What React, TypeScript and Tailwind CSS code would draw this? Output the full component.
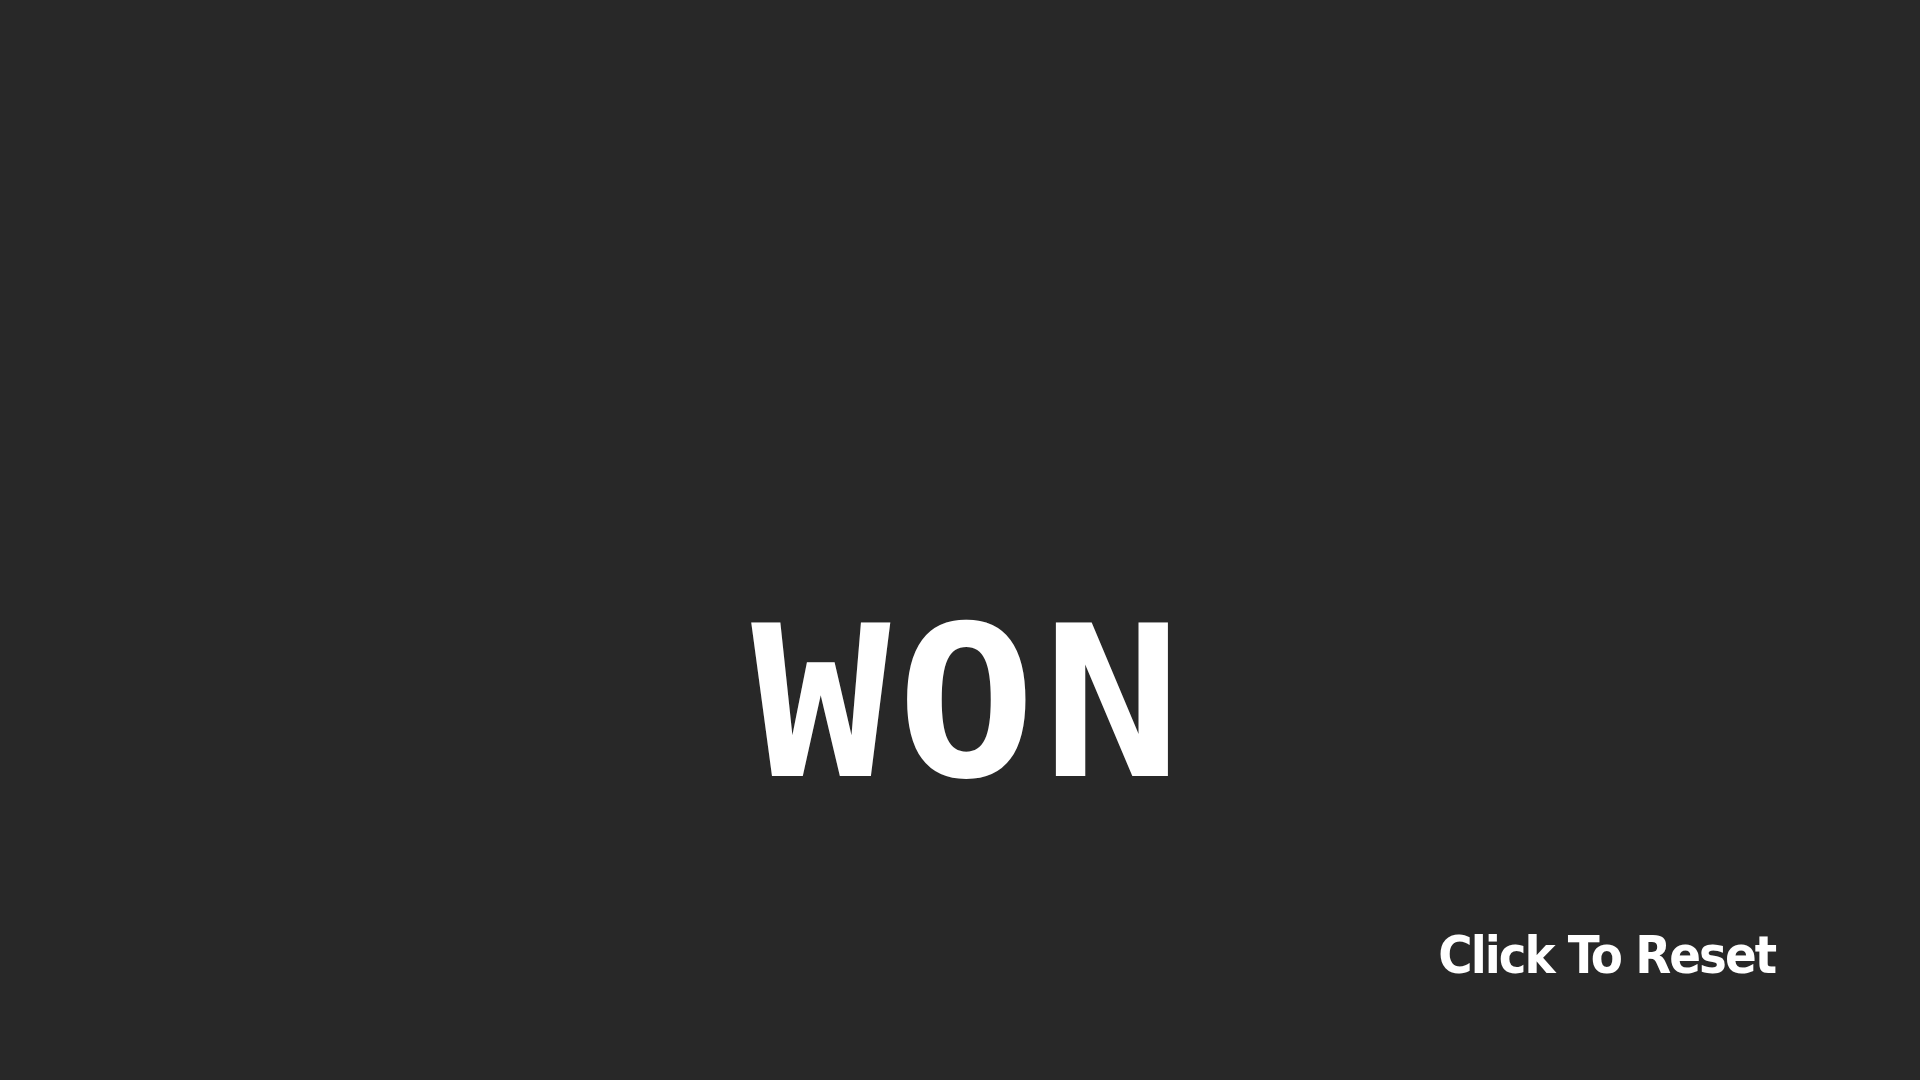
export default function App() {
  return (
    <div className="w-[1920px] h-[1080px] bg-[#282828] flex flex-col items-center overflow-hidden">
      <div className="mt-[589px] ml-[14px] h-[230px] flex items-center justify-center">
        <span
          className="inline-block text-white text-[210px] leading-none font-bold tracking-[6px] mr-[-6px] scale-x-[1.1]"
          style={{ fontFamily: '"DejaVu Sans Mono", monospace' }}
        >
          WON
        </span>
      </div>
      <div className="w-full flex justify-end pr-[145px] mt-[110px]">
        <span
          className="text-white text-[52px] leading-none font-bold tracking-[-2px]"
          style={{ fontFamily: '"DejaVu Sans Condensed", "DejaVu Sans", sans-serif' }}
        >
          Click To Reset
        </span>
      </div>
    </div>
  );
}
